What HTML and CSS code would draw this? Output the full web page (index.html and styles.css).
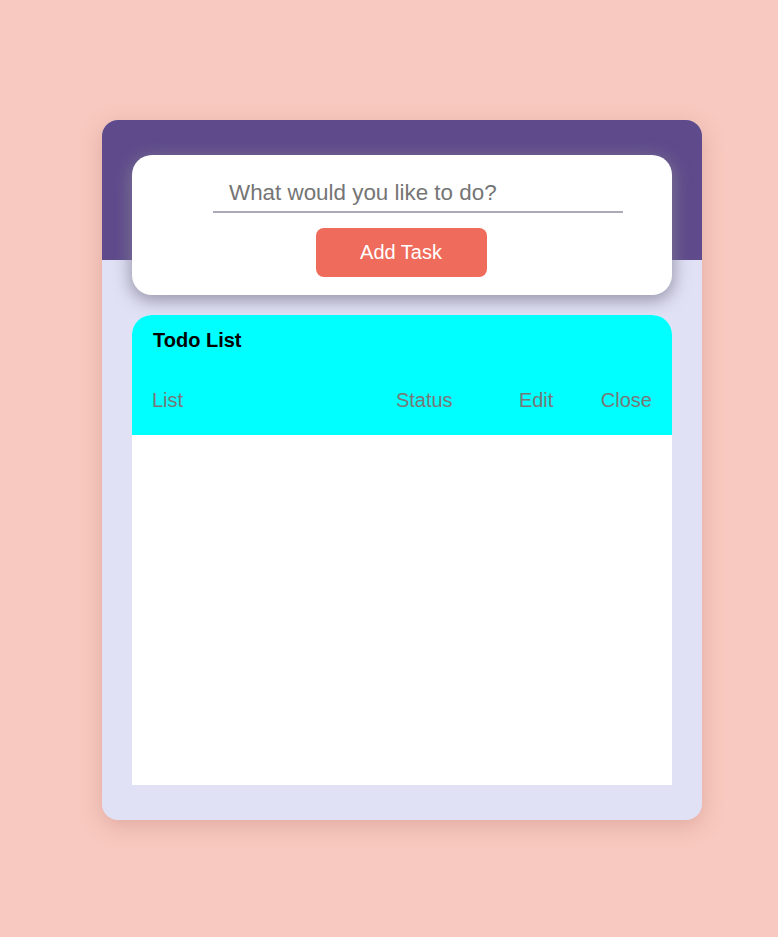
FILE: index.html
```html
<!DOCTYPE html>
<html>
<head>
<meta charset="utf-8">
<link rel="stylesheet" href="styles.css">
</head>
<body>
<div class="card">
  <div class="card-top"></div>
  <div class="card-body">
    <div class="form-box">
      <input class="task-input" type="text" placeholder="What would you like to do?">
      <button class="add-btn">Add Task</button>
    </div>
    <div class="todo">
      <div class="todo-head">
        <div class="todo-title">Todo List</div>
        <div class="cols">
          <span class="col col-list">List</span>
          <span class="col col-status">Status</span>
          <span class="col col-edit">Edit</span>
          <span class="col col-close">Close</span>
        </div>
      </div>
      <div class="todo-items"></div>
    </div>
  </div>
</div>
</body>
</html>
```
FILE: styles.css
```css
html, body {
  margin: 0;
  padding: 0;
}
body {
  background: #f8c9c0;
  font-family: "Liberation Sans", Arial, sans-serif;
  padding: 120px 0 0 102px;
  height: 937px;
  box-sizing: border-box;
}
.card {
  position: relative;
  width: 600px;
  height: 700px;
  border-radius: 16px;
  background: #e1e1f5;
  overflow: hidden;
  box-shadow: 0 6px 22px rgba(170, 100, 90, 0.3);
}
.card-top {
  height: 140px;
  background: #5f4b8b;
}
.card-body {
  position: absolute;
  left: 30px;
  right: 30px;
  top: 35px;
  display: flex;
  flex-direction: column;
  gap: 20px;
}
.form-box {
  height: 140px;
  background: #fff;
  border-radius: 20px;
  box-shadow: 0 4px 16px 2px rgba(130, 128, 150, 0.75);
  display: flex;
  flex-direction: column;
  align-items: center;
  box-sizing: border-box;
  padding-top: 20px;
}
.task-input {
  width: 410px;
  height: 38px;
  margin-left: 32px;
  box-sizing: border-box;
  border: none;
  border-bottom: 2px solid #aaaabb;
  outline: none;
  font-family: inherit;
  font-size: 22.4px;
  padding: 0 16px;
  color: #333;
  background: transparent;
}
.task-input::placeholder {
  color: #757575;
}
.add-btn {
  margin-top: 15px;
  margin-right: 2px;
  width: 171px;
  height: 49px;
  border: none;
  border-radius: 8px;
  background: #ef6b5b;
  color: #fff;
  font-family: inherit;
  font-size: 20px;
  cursor: pointer;
}
.todo {
  background: #fff;
  border-radius: 20px 20px 0 0;
  overflow: hidden;
}
.todo-head {
  background: #00ffff;
  height: 120px;
  box-sizing: border-box;
  padding: 14px 20px 0 20px;
}
.todo-title {
  font-weight: bold;
  font-size: 20px;
  color: #000;
  padding-left: 1px;
}
.cols {
  display: flex;
  margin-top: 37px;
  font-size: 20px;
  color: #777;
}
.col-list { width: 244px; }
.col-status { width: 123px; }
.col-edit { width: 82px; }
.col-close { flex: 1; text-align: right; }
.todo-items {
  height: 350px;
}
```
